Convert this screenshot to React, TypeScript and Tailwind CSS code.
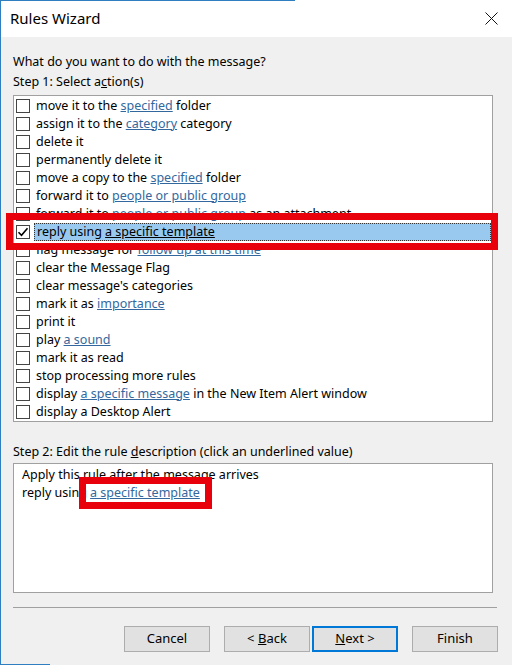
import React from "react";

type Part = { t: string; link?: boolean };

const ACTIONS: Part[][] = [
  [{ t: "move it to the " }, { t: "specified", link: true }, { t: " folder" }],
  [{ t: "assign it to the " }, { t: "category", link: true }, { t: " category" }],
  [{ t: "delete it" }],
  [{ t: "permanently delete it" }],
  [{ t: "move a copy to the " }, { t: "specified", link: true }, { t: " folder" }],
  [{ t: "forward it to " }, { t: "people or public group", link: true }],
  [{ t: "forward it to " }, { t: "people or public group", link: true }, { t: " as an attachment" }],
  [{ t: "reply using " }, { t: "a specific template", link: true }],
  [{ t: "flag message for " }, { t: "follow up at this time", link: true }],
  [{ t: "clear the Message Flag" }],
  [{ t: "clear message's categories" }],
  [{ t: "mark it as " }, { t: "importance", link: true }],
  [{ t: "print it" }],
  [{ t: "play " }, { t: "a sound", link: true }],
  [{ t: "mark it as read" }],
  [{ t: "stop processing more rules" }],
  [{ t: "display " }, { t: "a specific message", link: true }, { t: " in the New Item Alert window" }],
  [{ t: "display a Desktop Alert" }],
];

const SELECTED = 7;

function Checkbox({ checked }: { checked: boolean }) {
  return (
    <span className="grid h-[14px] w-[14px] shrink-0 place-items-center border border-[#444] bg-white">
      {checked && (
        <svg width="12" height="12" viewBox="0 0 12 12" fill="none" aria-hidden>
          <path d="M1.5 6.2 L4.5 9.2 L10.5 2.2" stroke="#000" strokeWidth="1.6" />
        </svg>
      )}
    </span>
  );
}

function Btn({ children, primary }: { children: React.ReactNode; primary?: boolean }) {
  return (
    <button
      className={`h-[26px] w-[86px] bg-[#e1e1e1] text-[13px] text-black ${
        primary ? "border-2 border-[#0078d7]" : "border border-[#adadad]"
      }`}
    >
      {children}
    </button>
  );
}

export default function App() {
  return (
    <div
      className="relative h-[665px] w-[512px] overflow-hidden bg-[#f0f0f0] text-[12.5px] text-black"
      style={{ fontFamily: '"Noto Sans", "Open Sans", sans-serif' }}
    >
      <div className="absolute left-0 top-0 h-px w-[295px] bg-[#2f7fc0]" />
      <div className="absolute left-0 top-0 h-full w-px bg-[#2f7fc0]" />
      <div className="absolute bottom-0 left-0 h-px w-[50px] bg-[#2f7fc0]" />

      {/* title bar */}
      <div className="flex h-[37px] items-center justify-between bg-white pl-[10px] pr-[14px]">
        <span className="text-[15px] leading-none">Rules Wizard</span>
        <svg width="13" height="13" viewBox="0 0 13 13" aria-hidden>
          <path d="M0.5 0.5 L12.5 12.5 M12.5 0.5 L0.5 12.5" stroke="#111" strokeWidth="1" />
        </svg>
      </div>

      <div className="pl-[13px] pr-[20px]">
        <div className="mt-[15px] leading-[20px]">What do you want to do with the message?</div>
        <div className="leading-[20px]">
          Step 1: Select a<span className="underline">c</span>tion(s)
        </div>

        <div className="mt-[3px] h-[327px] w-[480px] border border-[#a0a0a0] bg-white py-[1px]">
          {ACTIONS.map((parts, i) => (
            <div key={i} className="flex h-[18px] items-center pl-[2px]">
              <Checkbox checked={i === SELECTED} />
              <span
                className={`ml-[4px] flex h-[18px] flex-1 items-center whitespace-nowrap pl-[2px] leading-none ${
                  i === SELECTED ? "mr-[1px] border border-dotted border-[#333] bg-[#99c9ef]" : ""
                }`}
              >
                {parts.map((p, j) =>
                  p.link ? (
                    <span key={j} className={`underline ${i === SELECTED ? "text-black" : "text-[#33689e]"}`}>
                      {p.t}
                    </span>
                  ) : (
                    <span key={j} className="whitespace-pre">{p.t}</span>
                  )
                )}
              </span>
            </div>
          ))}
        </div>

        <div className="mt-[20px] leading-[20px]">
          Step 2: Edit the rule <span className="underline">d</span>escription (click an underlined value)
        </div>
        <div className="mt-[1px] h-[130px] w-[480px] border border-[#a0a0a0] bg-white px-[8px] pt-[2px] leading-[18px]">
          <div>Apply this rule after the message arrives</div>
          <div>
            reply using <span className="text-[#33689e] underline">a specific template</span>
          </div>
        </div>

        <div className="mt-[14px] h-px w-[484px] bg-[#a0a0a0]" />

        <div className="mt-[18px] flex w-[485px] justify-end">
          <Btn>Cancel</Btn>
          <div className="ml-[14px] flex gap-[2px]">
            <Btn>
              &lt; <span className="underline">B</span>ack
            </Btn>
            <Btn primary>
              <span className="underline">N</span>ext &gt;
            </Btn>
          </div>
          <div className="ml-[14px]">
            <Btn>Finish</Btn>
          </div>
        </div>
      </div>

      {/* red annotation boxes */}
      <div className="absolute left-[6px] top-[213px] h-[37px] w-[492px] border-[7px] border-[#e8000b]" />
      <div className="absolute left-[79px] top-[477px] h-[32px] w-[133px] border-[7px] border-[#e8000b]" />
    </div>
  );
}
